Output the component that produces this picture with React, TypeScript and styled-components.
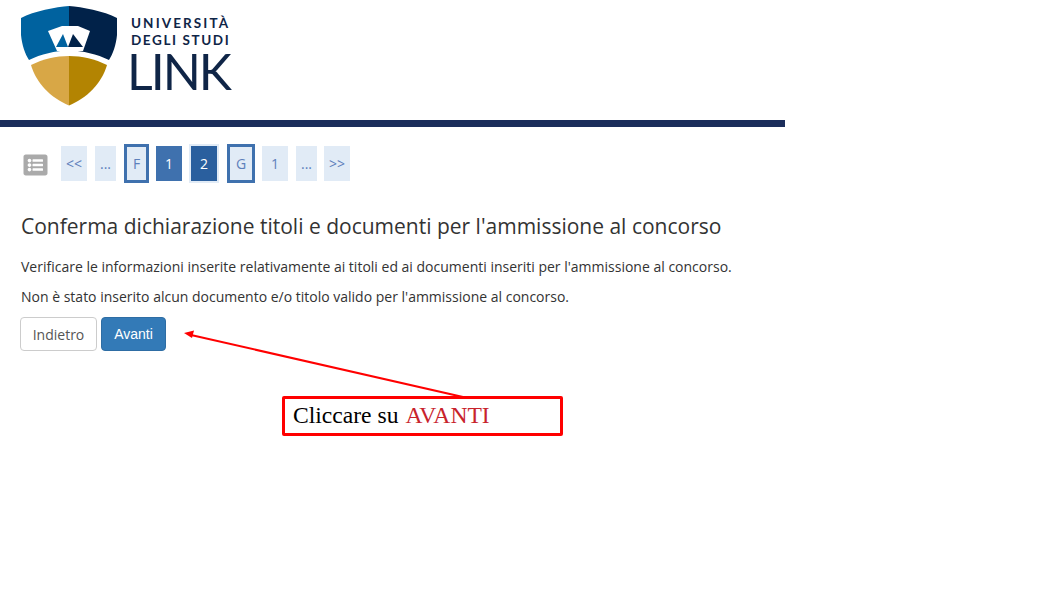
import styled, { createGlobalStyle } from "styled-components";
import { FaListAlt } from "react-icons/fa";

const GlobalStyle = createGlobalStyle`
  html, body {
    margin: 0;
    padding: 0;
    background: #fff;
  }
  body {
    font-family: "Open Sans", "Liberation Sans", sans-serif;
    color: #333;
  }
`;

const Page = styled.div`
  position: relative;
  width: 1058px;
  height: 595px;
  overflow: hidden;
`;

const Header = styled.header`
  width: 785px;
  height: 127px;
  box-sizing: border-box;
  border-bottom: 7px solid #1b2d5b;
  padding: 5px 0 0 21px;
  display: flex;
  gap: 13px;
`;

const LogoText = styled.div`
  display: flex;
  flex-direction: column;
  color: #0f2547;
  font-family: "Lato", "Liberation Sans", sans-serif;
`;

const LogoLine = styled.span<{ $spacing: number }>`
  font-size: 13.5px;
  font-weight: 700;
  line-height: 17px;
  letter-spacing: ${(p) => p.$spacing}px;
  white-space: nowrap;
  &:first-child {
    margin-top: 10px;
  }
`;

const LogoLink = styled.span`
  font-size: 50px;
  font-weight: 400;
  line-height: 44px;
  letter-spacing: -2px;
  margin-left: -4px;
`;

const Main = styled.main`
  padding: 17px 0 0 21px;
`;

const Pager = styled.nav`
  display: flex;
  align-items: center;
  height: 39px;
`;

const ListIcon = styled(FaListAlt)`
  width: 27px;
  height: 24px;
  color: #aaa;
  margin: 3px 12px 0 1px;
`;

type ItemKind = "plain" | "letter" | "done" | "current";

const PageItem = styled.a<{ $kind: ItemKind; $width: number; $gap: number }>`
  display: flex;
  align-items: center;
  justify-content: center;
  box-sizing: border-box;
  font-size: 14px;
  width: ${(p) => p.$width}px;
  margin-right: ${(p) => p.$gap}px;
  height: ${(p) => (p.$kind === "letter" || p.$kind === "current" ? "39px" : "35px")};
  background: ${(p) =>
    p.$kind === "done" ? "#3f71ae" : p.$kind === "current" ? "#2a5f9e" : "#e1ebf6"};
  color: ${(p) => (p.$kind === "done" || p.$kind === "current" ? "#fff" : "#5d80bb")};
  border: ${(p) =>
    p.$kind === "letter"
      ? "3px solid #3f71ae"
      : p.$kind === "current"
        ? "2px solid #e1ebf6"
        : "none"};
`;

const Title = styled.h1`
  margin: 28px 0 0;
  font-size: 21px;
  font-weight: 400;
  line-height: 30px;
  color: #333;
  white-space: nowrap;
`;

const Text = styled.p`
  margin: 16px 0 0;
  font-size: 14px;
  line-height: 20px;
  color: #333;
  white-space: nowrap;
  & + & {
    margin-top: 10px;
  }
`;

const Actions = styled.div`
  display: flex;
  gap: 4px;
  margin: 10px 0 0 -1px;
`;

const Button = styled.button<{ $primary?: boolean }>`
  box-sizing: border-box;
  height: 34px;
  padding: 0;
  width: ${(p) => (p.$primary ? "65px" : "77px")};
  border-radius: 4px;
  border: 1px solid ${(p) => (p.$primary ? "#2e6da4" : "#ccc")};
  background: ${(p) => (p.$primary ? "#337ab7" : "#fff")};
  color: ${(p) => (p.$primary ? "#fff" : "#555")};
  font-size: 14px;
  font-family: ${(p) =>
    p.$primary ? '"Liberation Sans", sans-serif' : '"Open Sans", sans-serif'};
`;

const Arrow = styled.svg`
  position: absolute;
  left: 175px;
  top: 325px;
`;

const Callout = styled.div`
  position: absolute;
  left: 282px;
  top: 396px;
  width: 281px;
  height: 40px;
  box-sizing: border-box;
  border: 3px solid #f00;
  border-radius: 2px;
  padding-left: 8px;
  font-family: "Liberation Serif", serif;
  font-size: 23.6px;
  line-height: 32px;
  color: #000;
  background: #fff;
`;

const CalloutMark = styled.span`
  color: #c8232c;
  margin-left: 1px;
`;

const Logo = () => (
  <svg width="97" height="101" viewBox="0 0 97 101" aria-hidden="true">
    <path d="M48 1 C35 2 13 6 0 13 L0 30 C1 40 4 49 8 55 C20 49 34 46 48 45 Z" fill="#00629f" />
    <path d="M48 1 C61 2 83 6 96 13 L96 30 C95 40 92 49 88 55 C76 49 62 46 48 45 Z" fill="#012249" />
    <path d="M48 51 C35 51 22 54 10 60 C15 78 30 93 48 100.5 Z" fill="#d8a746" />
    <path d="M48 51 C61 51 74 54 86 60 C81 78 66 93 48 100.5 Z" fill="#b38402" />
    <path d="M27 26 L41 21 L57 21 L69 26 L62 46 L36 46 Z" fill="#fff" />
    <path d="M35 42 L42 29 L47 42 Z" fill="#00629f" />
    <path d="M47 42 L52 29 L62 42 Z" fill="#012249" />
  </svg>
);

const pagerItems: { label: string; kind: ItemKind; width: number; gap: number }[] = [
  { label: "<<", kind: "plain", width: 26, gap: 8 },
  { label: "...", kind: "plain", width: 21, gap: 8 },
  { label: "F", kind: "letter", width: 25, gap: 7 },
  { label: "1", kind: "done", width: 26, gap: 7 },
  { label: "2", kind: "current", width: 30, gap: 8 },
  { label: "G", kind: "letter", width: 28, gap: 7 },
  { label: "1", kind: "plain", width: 26, gap: 8 },
  { label: "...", kind: "plain", width: 21, gap: 7 },
  { label: ">>", kind: "plain", width: 26, gap: 0 },
];

export default function App() {
  return (
    <Page>
      <GlobalStyle />
      <Header>
        <Logo />
        <LogoText>
          <LogoLine $spacing={2.1}>UNIVERSITÀ</LogoLine>
          <LogoLine $spacing={1.6}>DEGLI STUDI</LogoLine>
          <LogoLink>LINK</LogoLink>
        </LogoText>
      </Header>
      <Main>
        <Pager>
          <ListIcon />
          {pagerItems.map((item, i) => (
            <PageItem key={i} $kind={item.kind} $width={item.width} $gap={item.gap}>
              {item.label}
            </PageItem>
          ))}
        </Pager>
        <Title>Conferma dichiarazione titoli e documenti per l'ammissione al concorso</Title>
        <Text>Verificare le informazioni inserite relativamente ai titoli ed ai documenti inseriti per l'ammissione al concorso.</Text>
        <Text>Non è stato inserito alcun documento e/o titolo valido per l'ammissione al concorso.</Text>
        <Actions>
          <Button>Indietro</Button>
          <Button $primary>Avanti</Button>
        </Actions>
      </Main>
      <Arrow width="300" height="80" viewBox="0 0 300 80" aria-hidden="true">
        <line x1="288" y1="72" x2="16" y2="10" stroke="#f00" strokeWidth="2" />
        <path d="M9 8 L19 5.5 L17 13 Z" fill="#f00" />
      </Arrow>
      <Callout>
        Cliccare su <CalloutMark>AVANTI</CalloutMark>
      </Callout>
    </Page>
  );
}
